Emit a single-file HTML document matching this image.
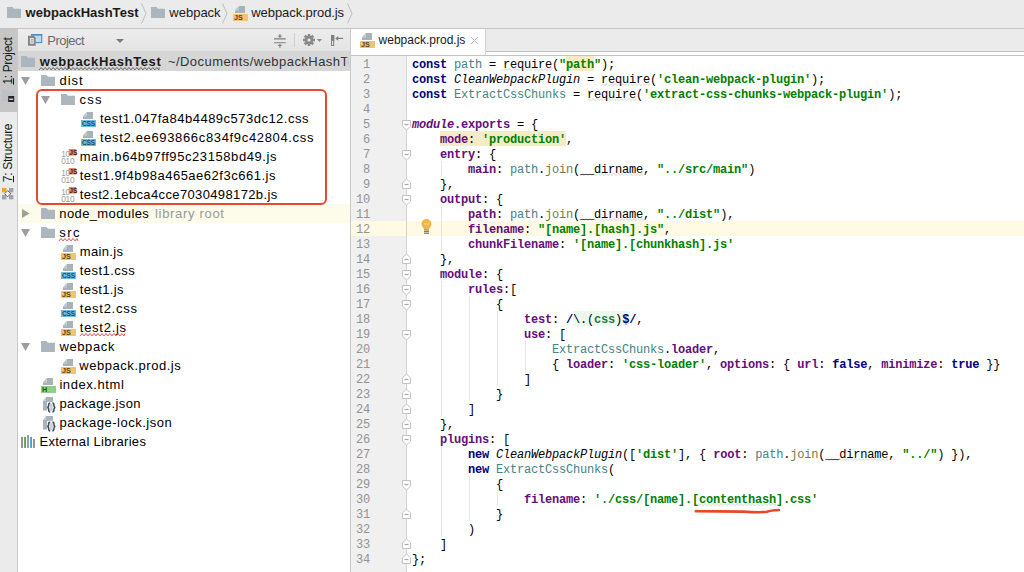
<!DOCTYPE html><html><head><meta charset="utf-8"><style>
*{margin:0;padding:0;box-sizing:border-box}
html,body{width:1024px;height:572px;overflow:hidden;background:#fff;font-family:"Liberation Sans",sans-serif}
.a{position:absolute}
.row{position:absolute;left:18px;width:332px;height:19px}
.tx{position:absolute;font-size:13px;line-height:19px;height:19px;color:#000;white-space:nowrap}
.ln{position:absolute;left:351px;width:19px;height:15px;line-height:15px;text-align:right;font-family:"Liberation Mono",monospace;font-size:12px;letter-spacing:-0.2px;color:#939393}
.cl{position:absolute;height:15px;line-height:15px;font-family:"Liberation Mono",monospace;font-size:12px;letter-spacing:-0.2px;white-space:pre;color:#000}
.k{color:#000080;font-weight:bold}
.s{color:#008000;font-weight:bold}
.sr{color:#1a7a4a;font-weight:bold}
.p{color:#660e7a;font-weight:bold}
.g{color:#458383}
.m{color:#7a7a43}
.i{font-style:italic}
.hl{position:absolute;height:15px}
.guide{position:absolute;width:1px;background:#e4e4e4}
svg{position:absolute;overflow:visible}
</style></head><body>
<div class="a" style="left:0;top:0;width:1024px;height:29px;background:#ebebeb;border-bottom:1px solid #c4c4c4"></div>
<svg style="left:7px;top:7px" width="14" height="11" viewBox="0 0 14 11"><path d="M0 0H5.5L7 1.8H14V11H0Z" fill="#acb6be"/></svg>
<span class="a" style="left:25.5px;top:3px;font:bold 13px/19px 'Liberation Sans',sans-serif;color:#1a1a1a;letter-spacing:0.038px">webpackHashTest</span>
<svg style="left:140.5px;top:3px" width="6" height="21" viewBox="0 0 6 21"><path d="M0.5 0.5L5 10.5L0.5 20.5" fill="none" stroke="#b0b0b0" stroke-width="0.8"/></svg>
<svg style="left:151px;top:7px" width="14" height="11" viewBox="0 0 14 11"><path d="M0 0H5.5L7 1.8H14V11H0Z" fill="#acb6be"/></svg>
<span class="a" style="left:169.3px;top:3px;font:13px/19px 'Liberation Sans',sans-serif;color:#1a1a1a">webpack</span>
<svg style="left:222px;top:3px" width="6" height="21" viewBox="0 0 6 21"><path d="M0.5 0.5L5 10.5L0.5 20.5" fill="none" stroke="#b0b0b0" stroke-width="0.8"/></svg>
<svg style="left:235px;top:6px" width="10" height="7" viewBox="0 0 10 7"><path d="M3.8 0H10V7H0V4.3H3.8Z" fill="#a8b2ba"/><path d="M0 4.3L3.8 0V4.3Z" fill="#bcc4cc"/></svg><svg style="left:233px;top:14px" width="15" height="7" viewBox="0 0 15 7"><rect width="15" height="7" fill="#f2c46f"/><text x="1" y="6.2" font-family="Liberation Sans" font-weight="bold" font-size="7.2" letter-spacing="0" fill="#5a4418">JS</text></svg>
<span class="a" style="left:251.3px;top:3px;font:13px/19px 'Liberation Sans',sans-serif;color:#1a1a1a;letter-spacing:-0.08px">webpack.prod.js</span>
<svg style="left:346.5px;top:3px" width="6" height="21" viewBox="0 0 6 21"><path d="M0.5 0.5L5 10.5L0.5 20.5" fill="none" stroke="#b0b0b0" stroke-width="0.8"/></svg>
<div class="a" style="left:0;top:29px;width:18px;height:543px;background:#ebebeb;border-right:1px solid #c9c9c9"></div>
<div class="a" style="left:0;top:29px;width:17px;height:83px;background:#c6c6c6"></div>
<span class="a" style="left:-17.5px;top:54px;width:50px;height:14px;transform:rotate(-90deg);font:12px/14px 'Liberation Sans',sans-serif;color:#1a1a1a;text-align:center;white-space:nowrap;letter-spacing:-0.35px"><u style="text-underline-offset:1px">1</u>: Project</span>
<span class="a" style="left:-25.5px;top:146px;width:66px;height:14px;transform:rotate(-90deg);font:12px/14px 'Liberation Sans',sans-serif;color:#1a1a1a;text-align:center;white-space:nowrap;letter-spacing:-0.3px"><u style="text-underline-offset:1px">7</u>: Structure</span>
<svg style="left:1.5px;top:90px" width="13" height="12" viewBox="0 0 13 12"><path d="M0 0H5L6 1.5H12V11H0Z" fill="#bcc2c8"/><rect x="6.2" y="6" width="6" height="6" fill="#262626"/><rect x="7.2" y="8.6" width="4" height="1.2" fill="#f0f0f0"/></svg>
<svg style="left:2px;top:188px" width="12" height="12" viewBox="0 0 12 12"><path d="M5.7 2.6L8.8 5.7L5.7 8.8L2.6 5.7Z" fill="#f4f4f4" stroke="#5a5a5a" stroke-width="1"/><rect x="0" y="0" width="4.4" height="4.4" fill="#eaa52a"/><rect x="7" y="0" width="4.4" height="4.4" fill="#9ea6ad"/><rect x="0" y="7" width="4.4" height="4.4" fill="#9ea6ad"/><rect x="7" y="7" width="4.4" height="4.4" fill="#9ea6ad"/></svg>
<div class="a" style="left:18px;top:29px;width:332px;height:22px;background:linear-gradient(#ededed,#e4e4e4)"></div>
<svg style="left:28px;top:34px" width="15" height="12" viewBox="0 0 15 12"><rect x="3.7" y="0.6" width="10" height="8" fill="#b9dcf1" stroke="#4d8fbf" stroke-width="1.1"/><rect x="3.2" y="0" width="11" height="1.6" fill="#4d8fbf"/><path d="M0 1.8H5.8L7.7 3.7V11.8H0Z" fill="#868686"/><rect x="2.1" y="4.1" width="3.6" height="5.6" fill="#f4f4f4"/><rect x="2.9" y="5.3" width="2" height="1.1" fill="#868686"/><rect x="2.9" y="7.4" width="2" height="1.1" fill="#868686"/></svg>
<span class="a" style="left:47.3px;top:31px;font:13px/19px 'Liberation Sans',sans-serif;color:#6a6a6a;letter-spacing:-0.543px">Project</span>
<svg style="left:116px;top:39px" width="8" height="4" viewBox="0 0 8 4"><path d="M0 0H8L4 4Z" fill="#7a7a7a"/></svg>
<svg style="left:273.5px;top:33.5px" width="12" height="14" viewBox="0 0 12 14"><path d="M0 4.9H11.8M0 8.7H11.8" stroke="#7f7f7f" stroke-width="1.1"/><path d="M5.9 0V2.5M5.9 11V13.8" stroke="#7f7f7f" stroke-width="1.1"/><path d="M3.6 1.8H8.2L5.9 4Z M3.6 12H8.2L5.9 9.7Z" fill="#7f7f7f"/></svg>
<div class="a" style="left:294px;top:33px;width:1px;height:14px;background:#cfcfcf"></div>
<svg style="left:303px;top:34px" width="12" height="12" viewBox="-6 -6 12 12"><g fill="#8a8a8a"><circle r="4.2"/><rect x="-1.3" y="-6" width="2.6" height="12"/><rect x="-6" y="-1.3" width="12" height="2.6"/><rect x="-1.3" y="-6" width="2.6" height="12" transform="rotate(45)"/><rect x="-1.3" y="-6" width="2.6" height="12" transform="rotate(-45)"/></g><circle r="1.6" fill="#e9e9e9"/></svg>
<svg style="left:317px;top:39px" width="5" height="3" viewBox="0 0 5 3"><path d="M0 0H5L2.5 3Z" fill="#8a8a8a"/></svg>
<svg style="left:331px;top:35px" width="13" height="11" viewBox="0 0 13 11"><rect x="0.5" y="0.5" width="2.2" height="10" fill="none" stroke="#7f7f7f" stroke-width="1"/><rect x="0" y="0" width="3.2" height="6" fill="#7f7f7f"/><path d="M6 3.4H12.2" stroke="#7f7f7f" stroke-width="1.2"/><path d="M4.2 3.4L7.2 1V5.8Z" fill="#7f7f7f"/></svg>
<div class="a" style="left:18px;top:51px;width:332px;height:521px;background:#fff"></div>
<div class="a" style="left:18px;top:51px;width:332px;height:20px;background:#d6d6d6"></div>
<div class="a" style="left:18px;top:204px;width:332px;height:19px;background:#fdfbea"></div>
<div class="a" style="left:0;top:0;width:350px;height:572px;overflow:hidden">
<svg style="left:21px;top:56px" width="14" height="11" viewBox="0 0 14 11"><path d="M0 0H5.5L7 1.8H14V11H0Z" fill="#acb6be"/></svg>
<span class="tx" style="left:39.7px;top:52px;letter-spacing:0.617px;color:#1a1a1a;font-weight:bold;">webpackHashTest</span>
<span class="tx" style="left:167.9px;top:52px;color:#333;letter-spacing:0.45px">~/Documents/webpackHashTest</span>
<div class="a" style="left:350px;top:51px;width:674px;height:20px;background:#fff"></div>
<svg style="left:21px;top:76.5px" width="9" height="8" viewBox="0 0 9 8"><path d="M0 0H9L4.5 8Z" fill="#9e9e9e"/></svg>
<svg style="left:41px;top:75px" width="14" height="11" viewBox="0 0 14 11"><path d="M0 0H5.5L7 1.8H14V11H0Z" fill="#acb6be"/></svg>
<span class="tx" style="left:59.5px;top:71px;letter-spacing:0.923px;color:#000;font-weight:normal;">dist</span>
<svg style="left:41px;top:95.5px" width="9" height="8" viewBox="0 0 9 8"><path d="M0 0H9L4.5 8Z" fill="#9e9e9e"/></svg>
<svg style="left:61px;top:94px" width="14" height="11" viewBox="0 0 14 11"><path d="M0 0H5.5L7 1.8H14V11H0Z" fill="#acb6be"/></svg>
<span class="tx" style="left:79.5px;top:90px;letter-spacing:1.25px;color:#000;font-weight:normal;">css</span>
<svg style="left:83px;top:112px" width="10" height="7" viewBox="0 0 10 7"><path d="M3.8 0H10V7H0V4.3H3.8Z" fill="#a8b2ba"/><path d="M0 4.3L3.8 0V4.3Z" fill="#bcc4cc"/></svg><svg style="left:81px;top:120px" width="15" height="7" viewBox="0 0 15 7"><rect width="15" height="7" fill="#6fbbe3"/><text x="1" y="6.2" font-family="Liberation Sans" font-weight="bold" font-size="6.6" letter-spacing="-0.2" fill="#1d4862">CSS</text></svg>
<span class="tx" style="left:99.9px;top:109px;letter-spacing:0.485px;color:#000;font-weight:normal;">test1.047fa84b4489c573dc12.css</span>
<svg style="left:83px;top:131px" width="10" height="7" viewBox="0 0 10 7"><path d="M3.8 0H10V7H0V4.3H3.8Z" fill="#a8b2ba"/><path d="M0 4.3L3.8 0V4.3Z" fill="#bcc4cc"/></svg><svg style="left:81px;top:139px" width="15" height="7" viewBox="0 0 15 7"><rect width="15" height="7" fill="#6fbbe3"/><text x="1" y="6.2" font-family="Liberation Sans" font-weight="bold" font-size="6.6" letter-spacing="-0.2" fill="#1d4862">CSS</text></svg>
<span class="tx" style="left:99.9px;top:128px;letter-spacing:0.658px;color:#000;font-weight:normal;">test2.ee693866c834f9c42804.css</span>
<svg style="left:60.5px;top:148px" width="17" height="17" viewBox="0 0 17 17"><text x="0.3" y="8.6" font-family="Liberation Sans" font-size="8.3" fill="#9c9c9c" letter-spacing="-0.3">10</text><text x="0.3" y="15.7" font-family="Liberation Sans" font-size="8.3" fill="#9c9c9c" letter-spacing="-0.3">010</text><rect x="7.7" y="1" width="7.6" height="6.6" fill="#e2896a"/><text x="8.3" y="6.9" font-family="Liberation Sans" font-weight="bold" font-size="6.6" fill="#4e1e0c">JS</text></svg>
<span class="tx" style="left:79.7px;top:147px;letter-spacing:0.578px;color:#000;font-weight:normal;">main.b64b97ff95c23158bd49.js</span>
<svg style="left:60.5px;top:167px" width="17" height="17" viewBox="0 0 17 17"><text x="0.3" y="8.6" font-family="Liberation Sans" font-size="8.3" fill="#9c9c9c" letter-spacing="-0.3">10</text><text x="0.3" y="15.7" font-family="Liberation Sans" font-size="8.3" fill="#9c9c9c" letter-spacing="-0.3">010</text><rect x="7.7" y="1" width="7.6" height="6.6" fill="#e2896a"/><text x="8.3" y="6.9" font-family="Liberation Sans" font-weight="bold" font-size="6.6" fill="#4e1e0c">JS</text></svg>
<span class="tx" style="left:79.7px;top:166px;letter-spacing:0.513px;color:#000;font-weight:normal;">test1.9f4b98a465ae62f3c661.js</span>
<svg style="left:60.5px;top:186px" width="17" height="17" viewBox="0 0 17 17"><text x="0.3" y="8.6" font-family="Liberation Sans" font-size="8.3" fill="#9c9c9c" letter-spacing="-0.3">10</text><text x="0.3" y="15.7" font-family="Liberation Sans" font-size="8.3" fill="#9c9c9c" letter-spacing="-0.3">010</text><rect x="7.7" y="1" width="7.6" height="6.6" fill="#e2896a"/><text x="8.3" y="6.9" font-family="Liberation Sans" font-weight="bold" font-size="6.6" fill="#4e1e0c">JS</text></svg>
<span class="tx" style="left:79.7px;top:185px;letter-spacing:0.368px;color:#000;font-weight:normal;">test2.1ebca4cce7030498172b.js</span>
<svg style="left:22px;top:209px" width="8" height="9" viewBox="0 0 8 9"><path d="M0 0V9L7.5 4.5Z" fill="#9e9e9e"/></svg>
<svg style="left:41px;top:208px" width="14" height="11" viewBox="0 0 14 11"><path d="M0 0H5.5L7 1.8H14V11H0Z" fill="#acb6be"/></svg>
<span class="tx" style="left:59.3px;top:204px;letter-spacing:0.383px;color:#000;font-weight:normal;">node_modules</span>
<span class="tx" style="left:155px;top:204px;letter-spacing:0.681px;color:#999;font-weight:normal;">library root</span>
<svg style="left:21px;top:228.5px" width="9" height="8" viewBox="0 0 9 8"><path d="M0 0H9L4.5 8Z" fill="#9e9e9e"/></svg>
<svg style="left:41px;top:227px" width="14" height="11" viewBox="0 0 14 11"><path d="M0 0H5.5L7 1.8H14V11H0Z" fill="#acb6be"/></svg>
<span class="tx" style="left:59.3px;top:223px;letter-spacing:1.385px;color:#000;font-weight:normal;">src</span>
<svg style="left:63px;top:245px" width="10" height="7" viewBox="0 0 10 7"><path d="M3.8 0H10V7H0V4.3H3.8Z" fill="#a8b2ba"/><path d="M0 4.3L3.8 0V4.3Z" fill="#bcc4cc"/></svg><svg style="left:61px;top:253px" width="15" height="7" viewBox="0 0 15 7"><rect width="15" height="7" fill="#f2c46f"/><text x="1" y="6.2" font-family="Liberation Sans" font-weight="bold" font-size="7.2" letter-spacing="0" fill="#5a4418">JS</text></svg>
<span class="tx" style="left:79.8px;top:242px;letter-spacing:0.32px;color:#000;font-weight:normal;">main.js</span>
<svg style="left:63px;top:264px" width="10" height="7" viewBox="0 0 10 7"><path d="M3.8 0H10V7H0V4.3H3.8Z" fill="#a8b2ba"/><path d="M0 4.3L3.8 0V4.3Z" fill="#bcc4cc"/></svg><svg style="left:61px;top:272px" width="15" height="7" viewBox="0 0 15 7"><rect width="15" height="7" fill="#6fbbe3"/><text x="1" y="6.2" font-family="Liberation Sans" font-weight="bold" font-size="6.6" letter-spacing="-0.2" fill="#1d4862">CSS</text></svg>
<span class="tx" style="left:79.8px;top:261px;letter-spacing:0.463px;color:#000;font-weight:normal;">test1.css</span>
<svg style="left:63px;top:283px" width="10" height="7" viewBox="0 0 10 7"><path d="M3.8 0H10V7H0V4.3H3.8Z" fill="#a8b2ba"/><path d="M0 4.3L3.8 0V4.3Z" fill="#bcc4cc"/></svg><svg style="left:61px;top:291px" width="15" height="7" viewBox="0 0 15 7"><rect width="15" height="7" fill="#f2c46f"/><text x="1" y="6.2" font-family="Liberation Sans" font-weight="bold" font-size="7.2" letter-spacing="0" fill="#5a4418">JS</text></svg>
<span class="tx" style="left:79.8px;top:280px;letter-spacing:0.374px;color:#000;font-weight:normal;">test1.js</span>
<svg style="left:63px;top:302px" width="10" height="7" viewBox="0 0 10 7"><path d="M3.8 0H10V7H0V4.3H3.8Z" fill="#a8b2ba"/><path d="M0 4.3L3.8 0V4.3Z" fill="#bcc4cc"/></svg><svg style="left:61px;top:310px" width="15" height="7" viewBox="0 0 15 7"><rect width="15" height="7" fill="#6fbbe3"/><text x="1" y="6.2" font-family="Liberation Sans" font-weight="bold" font-size="6.6" letter-spacing="-0.2" fill="#1d4862">CSS</text></svg>
<span class="tx" style="left:79.8px;top:299px;letter-spacing:0.726px;color:#000;font-weight:normal;">test2.css</span>
<svg style="left:63px;top:321px" width="10" height="7" viewBox="0 0 10 7"><path d="M3.8 0H10V7H0V4.3H3.8Z" fill="#a8b2ba"/><path d="M0 4.3L3.8 0V4.3Z" fill="#bcc4cc"/></svg><svg style="left:61px;top:329px" width="15" height="7" viewBox="0 0 15 7"><rect width="15" height="7" fill="#f2c46f"/><text x="1" y="6.2" font-family="Liberation Sans" font-weight="bold" font-size="7.2" letter-spacing="0" fill="#5a4418">JS</text></svg>
<span class="tx" style="left:79.8px;top:318px;letter-spacing:0.731px;color:#000;font-weight:normal;">test2.js</span>
<svg style="left:21px;top:342.5px" width="9" height="8" viewBox="0 0 9 8"><path d="M0 0H9L4.5 8Z" fill="#9e9e9e"/></svg>
<svg style="left:41px;top:341px" width="14" height="11" viewBox="0 0 14 11"><path d="M0 0H5.5L7 1.8H14V11H0Z" fill="#acb6be"/></svg>
<span class="tx" style="left:59.4px;top:337px;letter-spacing:0.615px;color:#000;font-weight:normal;">webpack</span>
<svg style="left:63px;top:359px" width="10" height="7" viewBox="0 0 10 7"><path d="M3.8 0H10V7H0V4.3H3.8Z" fill="#a8b2ba"/><path d="M0 4.3L3.8 0V4.3Z" fill="#bcc4cc"/></svg><svg style="left:61px;top:367px" width="15" height="7" viewBox="0 0 15 7"><rect width="15" height="7" fill="#f2c46f"/><text x="1" y="6.2" font-family="Liberation Sans" font-weight="bold" font-size="7.2" letter-spacing="0" fill="#5a4418">JS</text></svg>
<span class="tx" style="left:79.3px;top:356px;letter-spacing:0.54px;color:#000;font-weight:normal;">webpack.prod.js</span>
<svg style="left:43px;top:378.3px" width="10" height="7" viewBox="0 0 10 7"><path d="M3.8 0H10V7H0V4.3H3.8Z" fill="#a8b2ba"/><path d="M0 4.3L3.8 0V4.3Z" fill="#bcc4cc"/></svg><svg style="left:40.8px;top:386px" width="15" height="7" viewBox="0 0 15 7"><rect width="15" height="7" fill="#92cf84"/><text x="1" y="6.2" font-family="Liberation Sans" font-weight="bold" font-size="7.2" letter-spacing="0" fill="#24522a">H</text></svg>
<span class="tx" style="left:59.4px;top:375px;letter-spacing:0.572px;color:#000;font-weight:normal;">index.html</span>
<svg style="left:43px;top:397.3px" width="14" height="16" viewBox="0 0 14 16"><path d="M3 0H10V5H4V13.4H0V4H3Z" fill="#a9b3bb"/><path d="M0 4L3 0V4Z" fill="#c3cad2"/><path d="M7.2 5.9C5.6 5.9 5.6 7 5.6 8.5C5.6 9.9 5 10.4 4.1 10.4C5 10.4 5.6 10.9 5.6 12.3C5.6 13.8 5.6 14.9 7.2 14.9" fill="none" stroke="#fff" stroke-width="3"/><path d="M9.4 5.9C11 5.9 11 7 11 8.5C11 9.9 11.6 10.4 12.5 10.4C11.6 10.4 11 10.9 11 12.3C11 13.8 11 14.9 9.4 14.9" fill="none" stroke="#fff" stroke-width="3"/><rect x="6.8" y="6.8" width="3" height="7.4" fill="#cfd1da"/><path d="M7.2 5.9C5.6 5.9 5.6 7 5.6 8.5C5.6 9.9 5 10.4 4.1 10.4C5 10.4 5.6 10.9 5.6 12.3C5.6 13.8 5.6 14.9 7.2 14.9" fill="none" stroke="#3f4d56" stroke-width="1.5"/><path d="M9.4 5.9C11 5.9 11 7 11 8.5C11 9.9 11.6 10.4 12.5 10.4C11.6 10.4 11 10.9 11 12.3C11 13.8 11 14.9 9.4 14.9" fill="none" stroke="#3f4d56" stroke-width="1.5"/></svg>
<span class="tx" style="left:59.4px;top:394px;letter-spacing:0.417px;color:#000;font-weight:normal;">package.json</span>
<svg style="left:43px;top:416.3px" width="14" height="16" viewBox="0 0 14 16"><path d="M3 0H10V5H4V13.4H0V4H3Z" fill="#a9b3bb"/><path d="M0 4L3 0V4Z" fill="#c3cad2"/><path d="M7.2 5.9C5.6 5.9 5.6 7 5.6 8.5C5.6 9.9 5 10.4 4.1 10.4C5 10.4 5.6 10.9 5.6 12.3C5.6 13.8 5.6 14.9 7.2 14.9" fill="none" stroke="#fff" stroke-width="3"/><path d="M9.4 5.9C11 5.9 11 7 11 8.5C11 9.9 11.6 10.4 12.5 10.4C11.6 10.4 11 10.9 11 12.3C11 13.8 11 14.9 9.4 14.9" fill="none" stroke="#fff" stroke-width="3"/><rect x="6.8" y="6.8" width="3" height="7.4" fill="#cfd1da"/><path d="M7.2 5.9C5.6 5.9 5.6 7 5.6 8.5C5.6 9.9 5 10.4 4.1 10.4C5 10.4 5.6 10.9 5.6 12.3C5.6 13.8 5.6 14.9 7.2 14.9" fill="none" stroke="#3f4d56" stroke-width="1.5"/><path d="M9.4 5.9C11 5.9 11 7 11 8.5C11 9.9 11.6 10.4 12.5 10.4C11.6 10.4 11 10.9 11 12.3C11 13.8 11 14.9 9.4 14.9" fill="none" stroke="#3f4d56" stroke-width="1.5"/></svg>
<span class="tx" style="left:59.4px;top:413px;letter-spacing:0.515px;color:#000;font-weight:normal;">package-lock.json</span>
<svg style="left:21px;top:435px" width="14" height="13" viewBox="0 0 14 13"><rect x="0" y="1.9" width="2" height="11" fill="#8f949a"/><rect x="3.1" y="1.9" width="1.9" height="11" fill="#5ea34f"/><rect x="6.1" y="0" width="1.8" height="12.9" fill="#8f949a"/><rect x="9.1" y="1.9" width="1.9" height="11" fill="#3fa3d6"/><rect x="12" y="4" width="2" height="8.9" fill="#8f949a"/></svg>
<span class="tx" style="left:39.4px;top:432px;letter-spacing:0.314px;color:#000;font-weight:normal;">External Libraries</span>
<svg style="left:39.2px;top:67.2px" width="120.4" height="3.4" viewBox="0 -0.5 120.4 3.4"><polyline points="0.00,2.40 2.00,0.00 4.00,2.40 6.00,0.00 8.00,2.40 10.00,0.00 12.00,2.40 14.00,0.00 16.00,2.40 18.00,0.00 20.00,2.40 22.00,0.00 24.00,2.40 26.00,0.00 28.00,2.40 30.00,0.00 32.00,2.40 34.00,0.00 36.00,2.40 38.00,0.00 40.00,2.40 42.00,0.00 44.00,2.40 46.00,0.00 48.00,2.40 50.00,0.00 52.00,2.40 54.00,0.00 56.00,2.40 58.00,0.00 60.00,2.40 62.00,0.00 64.00,2.40 66.00,0.00 68.00,2.40 70.00,0.00 72.00,2.40 74.00,0.00 76.00,2.40 78.00,0.00 80.00,2.40 82.00,0.00 84.00,2.40 86.00,0.00 88.00,2.40 90.00,0.00 92.00,2.40 94.00,0.00 96.00,2.40 98.00,0.00 100.00,2.40 102.00,0.00 104.00,2.40 106.00,0.00 108.00,2.40 110.00,0.00 112.00,2.40 114.00,0.00 116.00,2.40 118.00,0.00 120.00,2.40 120.40,0.00" fill="none" stroke="#5a5a5a" stroke-width="0.9"/></svg>
<div class="a" style="left:345px;top:51px;width:5px;height:20px;background:linear-gradient(90deg,rgba(214,214,214,0),#d6d6d6 80%)"></div>
<svg style="left:59px;top:238.2px" width="19.0" height="3.4" viewBox="0 -0.5 19.0 3.4"><polyline points="0.00,2.40 2.00,0.00 4.00,2.40 6.00,0.00 8.00,2.40 10.00,0.00 12.00,2.40 14.00,0.00 16.00,2.40 18.00,0.00 19.00,2.40" fill="none" stroke="#e04848" stroke-width="1.0"/></svg>
<svg style="left:79.5px;top:333.2px" width="45.1" height="3.4" viewBox="0 -0.5 45.1 3.4"><polyline points="0.00,2.40 2.00,0.00 4.00,2.40 6.00,0.00 8.00,2.40 10.00,0.00 12.00,2.40 14.00,0.00 16.00,2.40 18.00,0.00 20.00,2.40 22.00,0.00 24.00,2.40 26.00,0.00 28.00,2.40 30.00,0.00 32.00,2.40 34.00,0.00 36.00,2.40 38.00,0.00 40.00,2.40 42.00,0.00 44.00,2.40 45.10,0.00" fill="none" stroke="#e04848" stroke-width="1.0"/></svg>
</div>
<div class="a" style="left:35.8px;top:88.9px;width:291.5px;height:116.3px;border:2.9px solid #e64a2c;border-radius:6px"></div>
<div class="a" style="left:350px;top:29px;width:1px;height:543px;background:#c9c9c9"></div>
<div class="a" style="left:351px;top:29px;width:673px;height:23px;background:#ebebeb;border-bottom:1px solid #c2c2c2"></div>
<div class="a" style="left:351px;top:52px;width:673px;height:4px;background:#fff;border-bottom:1px solid #c2c2c2"></div>
<div class="a" style="left:351px;top:29px;width:135px;height:26px;background:#fff;border-right:1px solid #d2d2d2"></div>
<svg style="left:362px;top:33px" width="10" height="7" viewBox="0 0 10 7"><path d="M3.8 0H10V7H0V4.3H3.8Z" fill="#a8b2ba"/><path d="M0 4.3L3.8 0V4.3Z" fill="#bcc4cc"/></svg><svg style="left:360px;top:41px" width="15" height="7" viewBox="0 0 15 7"><rect width="15" height="7" fill="#f2c46f"/><text x="1" y="6.2" font-family="Liberation Sans" font-weight="bold" font-size="7.2" letter-spacing="0" fill="#5a4418">JS</text></svg>
<span class="a" style="left:378.6px;top:33px;font:12px/14px 'Liberation Sans',sans-serif;color:#1a1a1a">webpack.prod.js</span>
<svg style="left:471px;top:37px" width="7" height="7" viewBox="0 0 7 7"><path d="M0 0L7 7M7 0L0 7" stroke="#b5b5b5" stroke-width="1"/></svg>
<div class="a" style="left:351px;top:56px;width:55px;height:516px;background:#f0f0f0"></div>
<div class="a" style="left:407px;top:56px;width:617px;height:516px;background:#fff"></div>
<div class="a" style="left:351px;top:221px;width:673px;height:15px;background:#fffae3"></div>
<div class="a" style="left:406px;top:56px;width:1px;height:516px;background:#d4d4d4"></div>
<div class="ln" style="top:58px">1</div>
<div class="ln" style="top:73px">2</div>
<div class="ln" style="top:88px">3</div>
<div class="ln" style="top:103px">4</div>
<div class="ln" style="top:118px">5</div>
<div class="ln" style="top:133px">6</div>
<div class="ln" style="top:148px">7</div>
<div class="ln" style="top:163px">8</div>
<div class="ln" style="top:178px">9</div>
<div class="ln" style="top:193px">10</div>
<div class="ln" style="top:208px">11</div>
<div class="ln" style="top:223px">12</div>
<div class="ln" style="top:238px">13</div>
<div class="ln" style="top:253px">14</div>
<div class="ln" style="top:268px">15</div>
<div class="ln" style="top:283px">16</div>
<div class="ln" style="top:298px">17</div>
<div class="ln" style="top:313px">18</div>
<div class="ln" style="top:328px">19</div>
<div class="ln" style="top:343px">20</div>
<div class="ln" style="top:358px">21</div>
<div class="ln" style="top:373px">22</div>
<div class="ln" style="top:388px">23</div>
<div class="ln" style="top:403px">24</div>
<div class="ln" style="top:418px">25</div>
<div class="ln" style="top:433px">26</div>
<div class="ln" style="top:448px">27</div>
<div class="ln" style="top:463px">28</div>
<div class="ln" style="top:478px">29</div>
<div class="ln" style="top:493px">30</div>
<div class="ln" style="top:508px">31</div>
<div class="ln" style="top:523px">32</div>
<div class="ln" style="top:538px">33</div>
<div class="ln" style="top:553px">34</div>
<div class="hl" style="left:566.0px;top:56px;width:28.0px;background:#f4ecc2"></div>
<div class="hl" style="left:440.0px;top:131px;width:126.0px;background:#f5ebc5"></div>
<div class="hl" style="left:573.0px;top:311px;width:56.0px;background:#eff8ee"></div>
<div class="guide" style="left:441.0px;top:161px;height:15px"></div>
<div class="guide" style="left:441.0px;top:206px;height:45px"></div>
<div class="guide" style="left:441.0px;top:281px;height:135px"></div>
<div class="guide" style="left:469.0px;top:296px;height:105px"></div>
<div class="guide" style="left:497.0px;top:311px;height:75px"></div>
<div class="guide" style="left:525.0px;top:341px;height:30px"></div>
<div class="guide" style="left:441.0px;top:446px;height:90px"></div>
<div class="guide" style="left:469.0px;top:476px;height:45px"></div>
<div class="guide" style="left:497.0px;top:491px;height:15px"></div>
<svg style="left:402px;top:119.5px" width="10" height="11" viewBox="0 0 10 11"><path d="M0.5 0.5H8.5V6.2L4.5 10L0.5 6.2Z" fill="#fff" stroke="#c2c2c2" stroke-width="1"/><path d="M2.5 4.5H6.5" stroke="#a9a9a9" stroke-width="1.2"/></svg>
<svg style="left:402px;top:149.5px" width="10" height="11" viewBox="0 0 10 11"><path d="M0.5 0.5H8.5V6.2L4.5 10L0.5 6.2Z" fill="#fff" stroke="#c2c2c2" stroke-width="1"/><path d="M2.5 4.5H6.5" stroke="#a9a9a9" stroke-width="1.2"/></svg>
<svg style="left:402px;top:194.5px" width="10" height="11" viewBox="0 0 10 11"><path d="M0.5 0.5H8.5V6.2L4.5 10L0.5 6.2Z" fill="#fff" stroke="#c2c2c2" stroke-width="1"/><path d="M2.5 4.5H6.5" stroke="#a9a9a9" stroke-width="1.2"/></svg>
<svg style="left:402px;top:269.5px" width="10" height="11" viewBox="0 0 10 11"><path d="M0.5 0.5H8.5V6.2L4.5 10L0.5 6.2Z" fill="#fff" stroke="#c2c2c2" stroke-width="1"/><path d="M2.5 4.5H6.5" stroke="#a9a9a9" stroke-width="1.2"/></svg>
<svg style="left:402px;top:284.5px" width="10" height="11" viewBox="0 0 10 11"><path d="M0.5 0.5H8.5V6.2L4.5 10L0.5 6.2Z" fill="#fff" stroke="#c2c2c2" stroke-width="1"/><path d="M2.5 4.5H6.5" stroke="#a9a9a9" stroke-width="1.2"/></svg>
<svg style="left:402px;top:299.5px" width="10" height="11" viewBox="0 0 10 11"><path d="M0.5 0.5H8.5V6.2L4.5 10L0.5 6.2Z" fill="#fff" stroke="#c2c2c2" stroke-width="1"/><path d="M2.5 4.5H6.5" stroke="#a9a9a9" stroke-width="1.2"/></svg>
<svg style="left:402px;top:329.5px" width="10" height="11" viewBox="0 0 10 11"><path d="M0.5 0.5H8.5V6.2L4.5 10L0.5 6.2Z" fill="#fff" stroke="#c2c2c2" stroke-width="1"/><path d="M2.5 4.5H6.5" stroke="#a9a9a9" stroke-width="1.2"/></svg>
<svg style="left:402px;top:434.5px" width="10" height="11" viewBox="0 0 10 11"><path d="M0.5 0.5H8.5V6.2L4.5 10L0.5 6.2Z" fill="#fff" stroke="#c2c2c2" stroke-width="1"/><path d="M2.5 4.5H6.5" stroke="#a9a9a9" stroke-width="1.2"/></svg>
<svg style="left:402px;top:479.5px" width="10" height="11" viewBox="0 0 10 11"><path d="M0.5 0.5H8.5V6.2L4.5 10L0.5 6.2Z" fill="#fff" stroke="#c2c2c2" stroke-width="1"/><path d="M2.5 4.5H6.5" stroke="#a9a9a9" stroke-width="1.2"/></svg>
<svg style="left:402px;top:177.5px" width="10" height="11" viewBox="0 0 10 11"><path d="M0.5 10.5H8.5V4.8L4.5 1L0.5 4.8Z" fill="#fff" stroke="#c2c2c2" stroke-width="1"/><path d="M2.5 6.5H6.5" stroke="#a9a9a9" stroke-width="1.2"/></svg>
<svg style="left:402px;top:252.5px" width="10" height="11" viewBox="0 0 10 11"><path d="M0.5 10.5H8.5V4.8L4.5 1L0.5 4.8Z" fill="#fff" stroke="#c2c2c2" stroke-width="1"/><path d="M2.5 6.5H6.5" stroke="#a9a9a9" stroke-width="1.2"/></svg>
<svg style="left:402px;top:372.5px" width="10" height="11" viewBox="0 0 10 11"><path d="M0.5 10.5H8.5V4.8L4.5 1L0.5 4.8Z" fill="#fff" stroke="#c2c2c2" stroke-width="1"/><path d="M2.5 6.5H6.5" stroke="#a9a9a9" stroke-width="1.2"/></svg>
<svg style="left:402px;top:387.5px" width="10" height="11" viewBox="0 0 10 11"><path d="M0.5 10.5H8.5V4.8L4.5 1L0.5 4.8Z" fill="#fff" stroke="#c2c2c2" stroke-width="1"/><path d="M2.5 6.5H6.5" stroke="#a9a9a9" stroke-width="1.2"/></svg>
<svg style="left:402px;top:402.5px" width="10" height="11" viewBox="0 0 10 11"><path d="M0.5 10.5H8.5V4.8L4.5 1L0.5 4.8Z" fill="#fff" stroke="#c2c2c2" stroke-width="1"/><path d="M2.5 6.5H6.5" stroke="#a9a9a9" stroke-width="1.2"/></svg>
<svg style="left:402px;top:417.5px" width="10" height="11" viewBox="0 0 10 11"><path d="M0.5 10.5H8.5V4.8L4.5 1L0.5 4.8Z" fill="#fff" stroke="#c2c2c2" stroke-width="1"/><path d="M2.5 6.5H6.5" stroke="#a9a9a9" stroke-width="1.2"/></svg>
<svg style="left:402px;top:507.5px" width="10" height="11" viewBox="0 0 10 11"><path d="M0.5 10.5H8.5V4.8L4.5 1L0.5 4.8Z" fill="#fff" stroke="#c2c2c2" stroke-width="1"/><path d="M2.5 6.5H6.5" stroke="#a9a9a9" stroke-width="1.2"/></svg>
<svg style="left:402px;top:537.5px" width="10" height="11" viewBox="0 0 10 11"><path d="M0.5 10.5H8.5V4.8L4.5 1L0.5 4.8Z" fill="#fff" stroke="#c2c2c2" stroke-width="1"/><path d="M2.5 6.5H6.5" stroke="#a9a9a9" stroke-width="1.2"/></svg>
<svg style="left:402px;top:552.5px" width="10" height="11" viewBox="0 0 10 11"><path d="M0.5 10.5H8.5V4.8L4.5 1L0.5 4.8Z" fill="#fff" stroke="#c2c2c2" stroke-width="1"/><path d="M2.5 6.5H6.5" stroke="#a9a9a9" stroke-width="1.2"/></svg>
<svg style="left:420.5px;top:218.5px" width="11" height="16" viewBox="0 0 11 16"><circle cx="5.5" cy="5" r="5" fill="#f2b548"/><path d="M2.6 7.5H8.4V10H2.6Z" fill="#f2b548"/><path d="M3.2 4.3L4.3 5.8L5.5 4.3L6.7 5.8L7.8 4.3" fill="none" stroke="#fce7a8" stroke-width="0.9"/><rect x="3" y="10.3" width="5" height="1.2" fill="#8a7d6a"/><rect x="3" y="12" width="5" height="1.2" fill="#7d7d7d"/><rect x="3" y="13.7" width="5" height="1.2" fill="#7d7d7d"/></svg>
<svg style="left:503.0px;top:67.8px" width="49.0" height="3.2" viewBox="0 -0.5 49.0 3.2"><polyline points="0.00,2.20 2.00,0.00 4.00,2.20 6.00,0.00 8.00,2.20 10.00,0.00 12.00,2.20 14.00,0.00 16.00,2.20 18.00,0.00 20.00,2.20 22.00,0.00 24.00,2.20 26.00,0.00 28.00,2.20 30.00,0.00 32.00,2.20 34.00,0.00 36.00,2.20 38.00,0.00 40.00,2.20 42.00,0.00 44.00,2.20 46.00,0.00 48.00,2.20 49.00,0.00" fill="none" stroke="#d2d2d2" stroke-width="0.9"/></svg>
<svg style="left:601.0px;top:82.8px" width="49.0" height="3.2" viewBox="0 -0.5 49.0 3.2"><polyline points="0.00,2.20 2.00,0.00 4.00,2.20 6.00,0.00 8.00,2.20 10.00,0.00 12.00,2.20 14.00,0.00 16.00,2.20 18.00,0.00 20.00,2.20 22.00,0.00 24.00,2.20 26.00,0.00 28.00,2.20 30.00,0.00 32.00,2.20 34.00,0.00 36.00,2.20 38.00,0.00 40.00,2.20 42.00,0.00 44.00,2.20 46.00,0.00 48.00,2.20 49.00,0.00" fill="none" stroke="#d2d2d2" stroke-width="0.9"/></svg>
<svg style="left:587.0px;top:97.8px" width="49.0" height="3.2" viewBox="0 -0.5 49.0 3.2"><polyline points="0.00,2.20 2.00,0.00 4.00,2.20 6.00,0.00 8.00,2.20 10.00,0.00 12.00,2.20 14.00,0.00 16.00,2.20 18.00,0.00 20.00,2.20 22.00,0.00 24.00,2.20 26.00,0.00 28.00,2.20 30.00,0.00 32.00,2.20 34.00,0.00 36.00,2.20 38.00,0.00 40.00,2.20 42.00,0.00 44.00,2.20 46.00,0.00 48.00,2.20 49.00,0.00" fill="none" stroke="#d2d2d2" stroke-width="0.9"/></svg>
<svg style="left:580.0px;top:172.8px" width="63.0" height="3.2" viewBox="0 -0.5 63.0 3.2"><polyline points="0.00,2.20 2.00,0.00 4.00,2.20 6.00,0.00 8.00,2.20 10.00,0.00 12.00,2.20 14.00,0.00 16.00,2.20 18.00,0.00 20.00,2.20 22.00,0.00 24.00,2.20 26.00,0.00 28.00,2.20 30.00,0.00 32.00,2.20 34.00,0.00 36.00,2.20 38.00,0.00 40.00,2.20 42.00,0.00 44.00,2.20 46.00,0.00 48.00,2.20 50.00,0.00 52.00,2.20 54.00,0.00 56.00,2.20 58.00,0.00 60.00,2.20 62.00,0.00 63.00,2.20" fill="none" stroke="#d2d2d2" stroke-width="0.9"/></svg>
<svg style="left:580.0px;top:217.8px" width="63.0" height="3.2" viewBox="0 -0.5 63.0 3.2"><polyline points="0.00,2.20 2.00,0.00 4.00,2.20 6.00,0.00 8.00,2.20 10.00,0.00 12.00,2.20 14.00,0.00 16.00,2.20 18.00,0.00 20.00,2.20 22.00,0.00 24.00,2.20 26.00,0.00 28.00,2.20 30.00,0.00 32.00,2.20 34.00,0.00 36.00,2.20 38.00,0.00 40.00,2.20 42.00,0.00 44.00,2.20 46.00,0.00 48.00,2.20 50.00,0.00 52.00,2.20 54.00,0.00 56.00,2.20 58.00,0.00 60.00,2.20 62.00,0.00 63.00,2.20" fill="none" stroke="#d2d2d2" stroke-width="0.9"/></svg>
<svg style="left:825.0px;top:457.8px" width="63.0" height="3.2" viewBox="0 -0.5 63.0 3.2"><polyline points="0.00,2.20 2.00,0.00 4.00,2.20 6.00,0.00 8.00,2.20 10.00,0.00 12.00,2.20 14.00,0.00 16.00,2.20 18.00,0.00 20.00,2.20 22.00,0.00 24.00,2.20 26.00,0.00 28.00,2.20 30.00,0.00 32.00,2.20 34.00,0.00 36.00,2.20 38.00,0.00 40.00,2.20 42.00,0.00 44.00,2.20 46.00,0.00 48.00,2.20 50.00,0.00 52.00,2.20 54.00,0.00 56.00,2.20 58.00,0.00 60.00,2.20 62.00,0.00 63.00,2.20" fill="none" stroke="#d2d2d2" stroke-width="0.9"/></svg>
<svg style="left:699.0px;top:502.8px" width="77.0" height="3.2" viewBox="0 -0.5 77.0 3.2"><polyline points="0.00,2.20 2.00,0.00 4.00,2.20 6.00,0.00 8.00,2.20 10.00,0.00 12.00,2.20 14.00,0.00 16.00,2.20 18.00,0.00 20.00,2.20 22.00,0.00 24.00,2.20 26.00,0.00 28.00,2.20 30.00,0.00 32.00,2.20 34.00,0.00 36.00,2.20 38.00,0.00 40.00,2.20 42.00,0.00 44.00,2.20 46.00,0.00 48.00,2.20 50.00,0.00 52.00,2.20 54.00,0.00 56.00,2.20 58.00,0.00 60.00,2.20 62.00,0.00 64.00,2.20 66.00,0.00 68.00,2.20 70.00,0.00 72.00,2.20 74.00,0.00 76.00,2.20 77.00,0.00" fill="none" stroke="#c6d8c6" stroke-width="0.9"/></svg>
<div class="cl" style="top:58px;left:412px"><span class="k">const</span> <span class="g">path</span> = require(<span class="s">&quot;path&quot;</span>);</div>
<div class="cl" style="top:73px;left:412px"><span class="k">const</span> <span class="i">CleanWebpackPlugin</span> = require(<span class="s">&#x27;clean-webpack-plugin&#x27;</span>);</div>
<div class="cl" style="top:88px;left:412px"><span class="k">const</span> <span class="g">ExtractCssChunks</span> = require(<span class="s">&#x27;extract-css-chunks-webpack-plugin&#x27;</span>);</div>
<div class="cl" style="top:103px;left:412px"></div>
<div class="cl" style="top:118px;left:412px"><span class="p i">module</span><span class="p">.exports</span> = {</div>
<div class="cl" style="top:133px;left:412px">    <span class="p">mode</span>: <span class="s">&#x27;production&#x27;</span>,</div>
<div class="cl" style="top:148px;left:412px">    <span class="p">entry</span>: {</div>
<div class="cl" style="top:163px;left:412px">        <span class="p">main</span>: <span class="g">path</span>.<span class="m">join</span>(__dirname, <span class="s">&quot;../src/main&quot;</span>)</div>
<div class="cl" style="top:178px;left:412px">    },</div>
<div class="cl" style="top:193px;left:412px">    <span class="p">output</span>: {</div>
<div class="cl" style="top:208px;left:412px">        <span class="p">path</span>: <span class="g">path</span>.<span class="m">join</span>(__dirname, <span class="s">&quot;../dist&quot;</span>),</div>
<div class="cl" style="top:223px;left:412px">        <span class="p">filename</span>: <span class="s">&quot;[name].[hash].js&quot;</span>,</div>
<div class="cl" style="top:238px;left:412px">        <span class="p">chunkFilename</span>: <span class="s">&#x27;[name].[chunkhash].js&#x27;</span></div>
<div class="cl" style="top:253px;left:412px">    },</div>
<div class="cl" style="top:268px;left:412px">    <span class="p">module</span>: {</div>
<div class="cl" style="top:283px;left:412px">        <span class="p">rules</span>:[</div>
<div class="cl" style="top:298px;left:412px">            {</div>
<div class="cl" style="top:313px;left:412px">                <span class="p">test</span>: <span class="k">/</span>\.(<span class="sr">css</span>)<span class="k">$/</span>,</div>
<div class="cl" style="top:328px;left:412px">                <span class="p">use</span>: [</div>
<div class="cl" style="top:343px;left:412px">                    <span class="g">ExtractCssChunks</span>.<span class="p">loader</span>,</div>
<div class="cl" style="top:358px;left:412px">                    { <span class="p">loader</span>: <span class="s">&#x27;css-loader&#x27;</span>, <span class="p">options</span>: { <span class="p">url</span>: <span class="k">false</span>, <span class="p">minimize</span>: <span class="k">true</span> }}</div>
<div class="cl" style="top:373px;left:412px">                ]</div>
<div class="cl" style="top:388px;left:412px">            }</div>
<div class="cl" style="top:403px;left:412px">        ]</div>
<div class="cl" style="top:418px;left:412px">    },</div>
<div class="cl" style="top:433px;left:412px">    <span class="p">plugins</span>: [</div>
<div class="cl" style="top:448px;left:412px">        <span class="k">new</span> <span class="i">CleanWebpackPlugin</span>([<span class="s">&#x27;dist&#x27;</span>], { <span class="p">root</span>: <span class="g">path</span>.<span class="m">join</span>(__dirname, <span class="s">&quot;../&quot;</span>) }),</div>
<div class="cl" style="top:463px;left:412px">        <span class="k">new</span> <span class="g">ExtractCssChunks</span>(</div>
<div class="cl" style="top:478px;left:412px">            {</div>
<div class="cl" style="top:493px;left:412px">                <span class="p">filename</span>: <span class="s">&#x27;./css/[name].[contenthash].css&#x27;</span></div>
<div class="cl" style="top:508px;left:412px">            }</div>
<div class="cl" style="top:523px;left:412px">        )</div>
<div class="cl" style="top:538px;left:412px">    ]</div>
<div class="cl" style="top:553px;left:412px">};</div>
<svg style="left:690px;top:505px" width="95" height="12" viewBox="0 0 95 12"><path d="M5.8 6.3C20 6.5 40 6.3 53 6.6C62 7.2 72 7.3 77 6.8C80 5.6 84 5.2 89 5.0" fill="none" stroke="#e8472a" stroke-width="2.6" stroke-linecap="round"/></svg>
</body></html>
